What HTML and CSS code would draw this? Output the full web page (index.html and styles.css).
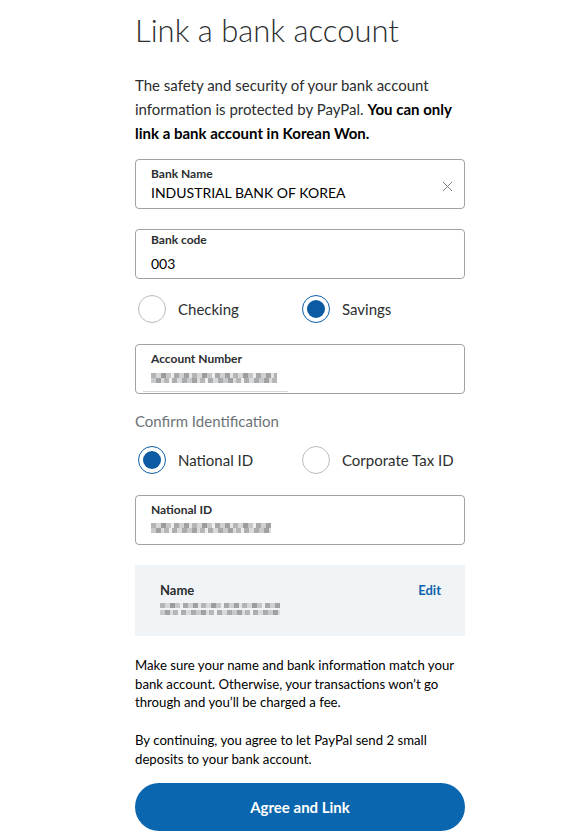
FILE: index.html
```html
<!DOCTYPE html>
<html>
<head>
<meta charset="utf-8">
<link rel="stylesheet" href="styles.css">
</head>
<body>
<main class="page">
  <h1 class="title">Link a bank account</h1>
  <p class="intro">The safety and security of your bank account information is protected by PayPal. <strong>You can only link a bank account in Korean Won.</strong></p>

  <div class="field with-clear">
    <div class="field-body">
      <span class="field-label">Bank Name</span>
      <span class="field-value">INDUSTRIAL BANK OF KOREA</span>
    </div>
    <svg class="clear" width="11" height="11" viewBox="0 0 11 11"><path d="M1 1 L10 10 M10 1 L1 10" stroke="#7a8085" stroke-width="1" fill="none"/></svg>
  </div>

  <div class="field code-field">
    <div class="field-body">
      <span class="field-label">Bank code</span>
      <span class="field-value">003</span>
    </div>
  </div>

  <div class="radio-row first">
    <label class="radio"><span class="dot"></span>Checking</label>
    <label class="radio"><span class="dot on"></span>Savings</label>
  </div>

  <div class="field">
    <div class="field-body">
      <span class="field-label">Account Number</span>
      <span class="blur w-acct"></span>
    </div>
    <span class="underline"></span>
  </div>

  <div class="section-label">Confirm Identification</div>

  <div class="radio-row second">
    <label class="radio"><span class="dot on"></span>National ID</label>
    <label class="radio"><span class="dot"></span>Corporate Tax ID</label>
  </div>

  <div class="field">
    <div class="field-body">
      <span class="field-label">National ID</span>
      <span class="blur w-id"></span>
    </div>
  </div>

  <div class="name-panel">
    <div class="name-info">
      <span class="name-label">Name</span>
      <span class="blur w-name"></span>
    </div>
    <a class="edit">Edit</a>
  </div>

  <p class="note">Make sure your name and bank information match your bank account. Otherwise, your transactions won’t go through and you’ll be charged a fee.</p>
  <p class="note second-note">By continuing, you agree to let PayPal send 2 small deposits to your bank account.</p>

  <button class="primary">Agree and Link</button>
</main>
</body>
</html>
```

FILE: styles.css
```css
* { box-sizing: border-box; }
body {
  margin: 0;
  background: #fff;
  font-family: Lato, "Open Sans", sans-serif;
  color: #2c2e2f;
}
.page {
  width: 566px;
  padding: 0 101px 0 135px;
}
.title {
  font-weight: 300;
  font-size: 31px;
  line-height: 40px;
  margin: 10px 0 0 0;
  color: #2c2e2f;
}
.intro {
  font-size: 15px;
  line-height: 24px;
  margin: 23px 0 14px 0;
  color: #2c2e2f;
}
.intro strong { font-weight: 700; color: #000; }

.field {
  position: relative;
  height: 50px;
  border: 1px solid #9da3a6;
  border-radius: 4px;
  display: flex;
  align-items: flex-start;
  padding: 7px 15px 0 15px;
  margin-bottom: 20px;
}
.field.with-clear { padding-right: 11px; }
.field.code-field { padding-top: 3px; }
.field-body {
  flex: 1;
  display: flex;
  flex-direction: column;
}
.field-label {
  font-size: 12px;
  font-weight: 700;
  line-height: 14px;
  color: #2c2e2f;
}
.field-value {
  font-size: 14px;
  line-height: 20px;
  margin-top: 2px;
  color: #000;
}
.code-field .field-value { margin-top: 7px; }
.clear { margin-top: 14px; }
.underline {
  position: absolute;
  left: 7px;
  bottom: 1px;
  width: 145px;
  height: 1px;
  background: #d5d8da;
}

.blur {
  display: block;
  height: 10px;
  margin-top: 7px;
  background:
    repeating-linear-gradient(90deg, #b3b4b6 0 5px, #d6d7d8 5px 10px, #9a9c9e 10px 15px, #c5c6c7 15px 20px, #eeeeef 20px 23px, #a6a8aa 23px 28px, #cfd0d1 28px 33px, #9fa1a3 33px 38px, #e4e4e5 38px 41px) top / 100% 5px no-repeat,
    repeating-linear-gradient(90deg, #c9cacb 0 5px, #a0a2a4 5px 10px, #dcdcdd 10px 13px, #b6b7b9 13px 18px, #f0f0f0 18px 21px, #acaeb0 21px 26px, #d9dadb 26px 31px, #a9abad 31px 36px) bottom / 100% 5px no-repeat;
}
.w-acct { width: 126px; }
.w-id { width: 120px; margin-top: 6px; }
.w-name { width: 120px; margin-top: 5px; height: 12px; }

.radio-row {
  display: grid;
  grid-template-columns: 164px 1fr;
  margin-left: 3px;
}
.radio-row.first { margin-top: -4px; margin-bottom: 21px; }
.radio-row.second { margin-top: 15px; margin-bottom: 21px; }
.radio {
  display: flex;
  align-items: center;
  gap: 12px;
  font-size: 15px;
  color: #2c2e2f;
}
.dot {
  width: 28px;
  height: 28px;
  border-radius: 50%;
  border: 1px solid #b7bcbf;
  display: inline-block;
  position: relative;
  flex-shrink: 0;
}
.dot.on {
  border: 1.5px solid #0a5ea8;
}
.dot.on::after {
  content: "";
  position: absolute;
  left: 50%;
  top: 50%;
  width: 18px;
  height: 18px;
  margin: -9px 0 0 -9px;
  border-radius: 50%;
  background: #0b5aa2;
}

.section-label {
  font-size: 15px;
  color: #6c7378;
  margin-top: -3px;
  line-height: 20px;
}

.name-panel {
  background: #f1f4f7;
  height: 71px;
  display: flex;
  justify-content: space-between;
  align-items: flex-start;
  padding: 17px 24px 0 25px;
}
.name-info { display: flex; flex-direction: column; }
.name-label { font-size: 13px; font-weight: 700; line-height: 16px; color: #2c2e2f; }
.edit { font-size: 13px; font-weight: 700; color: #0d64ad; line-height: 16px; }

.note {
  font-size: 13.2px;
  line-height: 18.5px;
  margin: 20px 0 0 0;
  color: #000;
}
.note.second-note { margin-top: 19.5px; }

.primary {
  display: block;
  width: 330px;
  height: 48px;
  margin-top: 15px;
  border: none;
  border-radius: 24px;
  background: #0a66ae;
  color: #fff;
  font-family: inherit;
  font-size: 15px;
  font-weight: 700;
}
```
